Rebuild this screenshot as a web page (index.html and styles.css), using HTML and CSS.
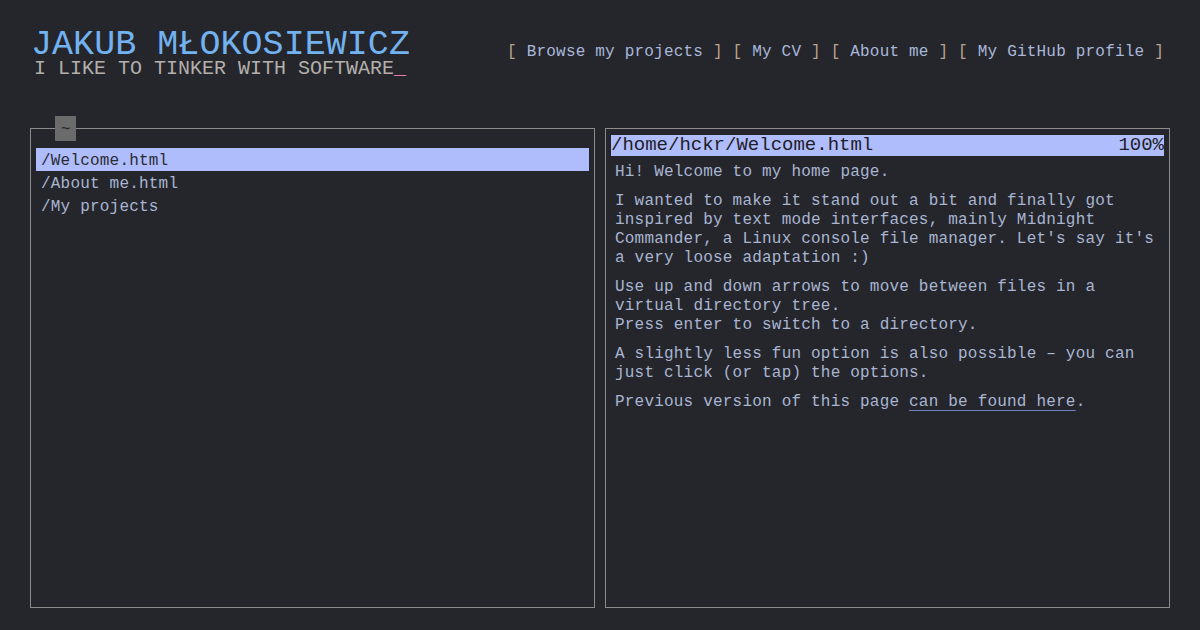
FILE: index.html
```
<!DOCTYPE html>
<html lang="en">
<head>
<meta charset="utf-8">
<title>Jakub Młokosiewicz</title>
<link rel="stylesheet" href="styles.css">
</head>
<body>
<div class="page">
  <header class="header">
    <div class="brand">
      <h1 class="title">JAKUB MŁOKOSIEWICZ</h1>
      <div class="subtitle">I LIKE TO TINKER WITH SOFTWARE<span class="cursor">_</span></div>
    </div>
    <nav class="nav">
      <span class="br">[</span> <a href="#">Browse my projects</a> <span class="br">]</span>
      <span class="br">[</span> <a href="#">My CV</a> <span class="br">]</span>
      <span class="br">[</span> <a href="#">About me</a> <span class="br">]</span>
      <span class="br">[</span> <a href="#">My GitHub profile</a> <span class="br">]</span>
    </nav>
  </header>
  <main class="panels">
    <section class="panel panel-left">
      <div class="tab">~</div>
      <ul class="files">
        <li class="file active">/Welcome.html</li>
        <li class="file">/About me.html</li>
        <li class="file">/My projects</li>
      </ul>
    </section>
    <section class="panel panel-right">
      <div class="viewer-bar"><span>/home/hckr/Welcome.html</span><span>100%</span></div>
      <div class="viewer">
        <p>Hi! Welcome to my home page.</p>
        <p>I wanted to make it stand out a bit and finally got inspired by text mode interfaces, mainly Midnight Commander, a Linux console file manager. Let's say it's a very loose adaptation :)</p>
        <p>Use up and down arrows to move between files in a virtual directory tree.<br>Press enter to switch to a directory.</p>
        <p>A slightly less fun option is also possible – you can just click (or tap) the options.</p>
        <p>Previous version of this page <a class="link" href="#">can be found here</a>.</p>
      </div>
    </section>
  </main>
</div>
</body>
</html>
```
FILE: styles.css
```
* { box-sizing: border-box; }
html, body { margin: 0; padding: 0; }
body {
  background: #25262b;
  font-family: "Liberation Mono", "DejaVu Sans Mono", monospace;
  color: #a9b5d2;
  width: 1200px;
  height: 630px;
  overflow: hidden;
}
.page { padding: 0 30px; }
.header {
  display: flex;
  justify-content: space-between;
  align-items: flex-start;
  padding-top: 32px;
  height: 128px;
}
.brand { padding-left: 1px; }
.title {
  margin: 0;
  font-weight: normal;
  font-size: 35px;
  line-height: 26px;
  color: #72b2f0;
  letter-spacing: 0.05px;
}
.subtitle {
  margin-top: 2px;
  font-size: 20px;
  line-height: 18px;
  color: #b3afab;
  padding-left: 3px;
}
.cursor { color: #e57ab4; }
.nav {
  padding-top: 10px;
  padding-right: 6px;
  font-size: 16px;
  line-height: 20px;
  letter-spacing: 0.2px;
  white-space: nowrap;
}
.nav a { color: #a9b7da; text-decoration: none; }
.nav .br { color: #b9a38e; }
.panels {
  display: flex;
  gap: 10px;
}
.panel {
  position: relative;
  flex: 1;
  height: 480px;
  border: 1px solid #8c8c8c;
}
.panel-left { padding: 19px 5px 5px; }
.tab {
  position: absolute;
  top: -13px;
  left: 24px;
  width: 21px;
  height: 25px;
  background: #6b6b6b;
  color: #23242a;
  font-size: 16px;
  line-height: 29px;
  text-align: center;
}
.files { list-style: none; margin: 0; padding: 0; }
.file {
  height: 23px;
  padding: 4px 0 0 5px;
  line-height: 19px;
  font-size: 16px;
  letter-spacing: 0.2px;
  color: #a9b5d2;
}
.file.active { background: #b0bdfc; color: #2a2b33; }
.panel-right { padding: 6px 5px; }
.viewer-bar {
  display: flex;
  justify-content: space-between;
  height: 21px;
  line-height: 21px;
  background: #b0bdfc;
  color: #1f2027;
  font-size: 19px;
}
.viewer {
  padding: 7px 4px 0;
  font-size: 16px;
  line-height: 19px;
  letter-spacing: 0.2px;
}
.viewer p { margin: 0 0 10px; }
.link {
  color: #a9b5d2;
  text-decoration: underline;
  text-decoration-color: #6e80bf;
  text-underline-offset: 4px;
}
```
